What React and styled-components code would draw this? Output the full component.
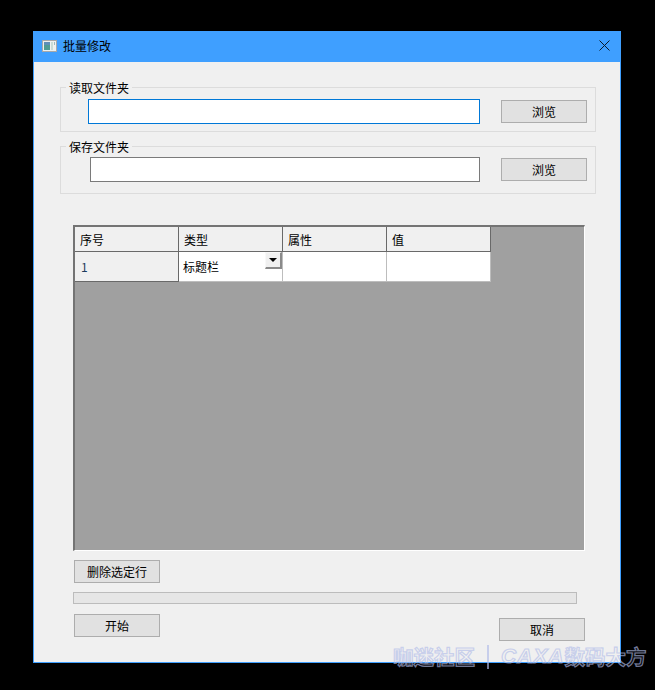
import styled, { createGlobalStyle } from 'styled-components';

const GlobalStyle = createGlobalStyle`
  html, body {
    margin: 0;
    padding: 0;
    background: #000;
  }
  body {
    font-family: "Noto Sans CJK SC", "Liberation Sans", sans-serif;
    font-size: 12px;
    color: #000;
  }
`;

const Page = styled.div`
  position: relative;
  width: 655px;
  height: 690px;
  padding: 31px 0 0 33px;
  box-sizing: border-box;
  overflow: hidden;
`;

const Dialog = styled.div`
  width: 588px;
  height: 632px;
  box-sizing: border-box;
  background: #f0f0f0;
  border: 1px solid #3f9fff;
  border-top: 0;
  display: flex;
  flex-direction: column;
`;

const TitleBar = styled.div`
  height: 31px;
  box-sizing: border-box;
  margin: 0 -1px;
  background: #3f9fff;
  display: flex;
  align-items: center;
  padding: 0 11px 2px 9px;
  gap: 6px;
  flex-shrink: 0;
`;

const TitleText = styled.span`
  flex: 1;
  font-size: 12px;
  line-height: 16px;
  color: #000;
`;

const Content = styled.div`
  padding: 18px 0 0 26px;
  display: flex;
  flex-direction: column;
`;

const Group = styled.fieldset`
  width: 536px;
  box-sizing: border-box;
  margin: ${(p) => p.$top}px 0 0;
  padding: 0;
  border: 1px solid #dcdcdc;
  min-width: 0;
`;

const GroupLabel = styled.legend`
  margin-left: 5px;
  padding: 0 3px;
  font-size: 12px;
  line-height: 15px;
  color: #000;
`;

const GroupRow = styled.div`
  display: flex;
  align-items: center;
  padding: ${(p) => p.$top}px 8px ${(p) => p.$bottom}px ${(p) => p.$left}px;
`;

const PathInput = styled.input`
  flex: 1;
  height: 25px;
  min-width: 0;
  box-sizing: border-box;
  padding: 0 3px;
  margin-right: 21px;
  background: #fff;
  border: 1px solid ${(p) => (p.$active ? '#0078d7' : '#7a7a7a')};
  outline: none;
`;

const Button = styled.button`
  width: 86px;
  height: 23px;
  box-sizing: border-box;
  padding: 0;
  flex-shrink: 0;
  background: #e1e1e1;
  border: 1px solid #adadad;
  font-family: inherit;
  font-size: 12px;
  line-height: 16px;
  color: #000;
`;

const TableFrame = styled.div`
  width: 512px;
  height: 326px;
  box-sizing: border-box;
  margin: 31px 0 0 13px;
  background: #a0a0a0;
  border-style: solid;
  border-width: 2px 1px 1px 2px;
  border-color: #747474 #fff #fff #747474;
`;

const TableGrid = styled.div`
  display: grid;
  grid-template-columns: repeat(4, 104px);
  grid-template-rows: 25px 30px;
  width: 416px;
`;

const HeaderCell = styled.div`
  box-sizing: border-box;
  background: #f0f0f0;
  border-right: 1px solid #696969;
  border-bottom: 1px solid #696969;
  padding: 5px 0 0 5px;
  line-height: 16px;
  color: #000;
`;

const RowHead = styled(HeaderCell)`
  padding: 7px 0 0 6px;
  color: #1c3a5c;
`;

const Cell = styled.div`
  position: relative;
  box-sizing: border-box;
  background: #fff;
  border-right: 1px solid #bdbdbd;
  border-bottom: 1px solid #bdbdbd;
  padding: 7px 0 0 4px;
  line-height: 16px;
  color: #000;
`;

const DropButton = styled.div`
  position: absolute;
  top: 0;
  right: 0;
  width: 17px;
  height: 17px;
  box-sizing: border-box;
  background: #f0f0f0;
  border-style: solid;
  border-width: 1px 2px 2px 1px;
  border-color: #f8f8f8 #8a8a8a #8a8a8a #f8f8f8;
  display: flex;
  align-items: center;
  justify-content: center;
`;

const DropArrow = styled.div`
  width: 0;
  height: 0;
  border-left: 4px solid transparent;
  border-right: 4px solid transparent;
  border-top: 4px solid #000;
`;

const DeleteRow = styled.div`
  margin: 9px 0 0 14px;
`;

const Progress = styled.div`
  width: 504px;
  height: 12px;
  box-sizing: border-box;
  margin: 9px 0 0 13px;
  background: #e6e6e6;
  border: 1px solid #bcbcbc;
`;

const FooterRow = styled.div`
  width: 511px;
  margin: 10px 0 0 14px;
  display: flex;
  justify-content: space-between;
  align-items: flex-start;
`;

const CancelButton = styled(Button)`
  margin-top: 4px;
`;

const Watermark = styled.div`
  position: absolute;
  left: 393px;
  top: 643px;
  font-size: 20.5px;
  line-height: 26px;
  font-weight: 700;
  white-space: nowrap;
  color: rgba(255, 255, 255, 0.08);
  -webkit-text-stroke: 1.2px rgba(176, 188, 232, 0.65);
  display: flex;
`;

const WatermarkBar = styled.span`
  width: 2px;
  height: 24px;
  margin: 2px 12px 0 12px;
  background: rgba(176, 188, 232, 0.65);
`;

const WatermarkLatin = styled.span`
  font-family: "Liberation Sans", sans-serif;
  font-style: italic;
  font-size: 21px;
  letter-spacing: 1px;
`;

function WindowIcon() {
  return (
    <svg width="15" height="12" viewBox="0 0 15 12">
      <rect x="0.5" y="0.5" width="14" height="11" fill="#eef1f0" stroke="#a9a9a9" />
      <rect x="2" y="2" width="6" height="8" fill="#4f9c94" />
      <rect x="2" y="2" width="6" height="3" fill="#5d8fb8" />
      <rect x="9" y="2" width="2" height="8" fill="#c9dcd6" />
      <rect x="12" y="2" width="1" height="3" fill="#9ab8c0" />
    </svg>
  );
}

function CloseIcon() {
  return (
    <svg width="11" height="11" viewBox="0 0 11 11">
      <path d="M0.5 0.5 L10.5 10.5 M10.5 0.5 L0.5 10.5" stroke="#0a1a2a" strokeWidth="1" fill="none" />
    </svg>
  );
}

export default function App() {
  return (
    <Page>
      <GlobalStyle />
      <Dialog>
        <TitleBar>
          <WindowIcon />
          <TitleText>批量修改</TitleText>
          <CloseIcon />
        </TitleBar>
        <Content>
          <Group $top={0}>
            <GroupLabel>读取文件夹</GroupLabel>
            <GroupRow $top={4} $bottom={7} $left={27}>
              <PathInput $active />
              <Button>浏览</Button>
            </GroupRow>
          </Group>
          <Group $top={7}>
            <GroupLabel>保存文件夹</GroupLabel>
            <GroupRow $top={3} $bottom={11} $left={29}>
              <PathInput />
              <Button>浏览</Button>
            </GroupRow>
          </Group>
          <TableFrame>
            <TableGrid>
              <HeaderCell>序号</HeaderCell>
              <HeaderCell>类型</HeaderCell>
              <HeaderCell>属性</HeaderCell>
              <HeaderCell>值</HeaderCell>
              <RowHead>1</RowHead>
              <Cell>
                标题栏
                <DropButton>
                  <DropArrow />
                </DropButton>
              </Cell>
              <Cell />
              <Cell />
            </TableGrid>
          </TableFrame>
          <DeleteRow>
            <Button>删除选定行</Button>
          </DeleteRow>
          <Progress />
          <FooterRow>
            <Button>开始</Button>
            <CancelButton>取消</CancelButton>
          </FooterRow>
        </Content>
      </Dialog>
      <Watermark>
        咖迷社区
        <WatermarkBar />
        <WatermarkLatin>CAXA</WatermarkLatin>
        数码大方
      </Watermark>
    </Page>
  );
}
